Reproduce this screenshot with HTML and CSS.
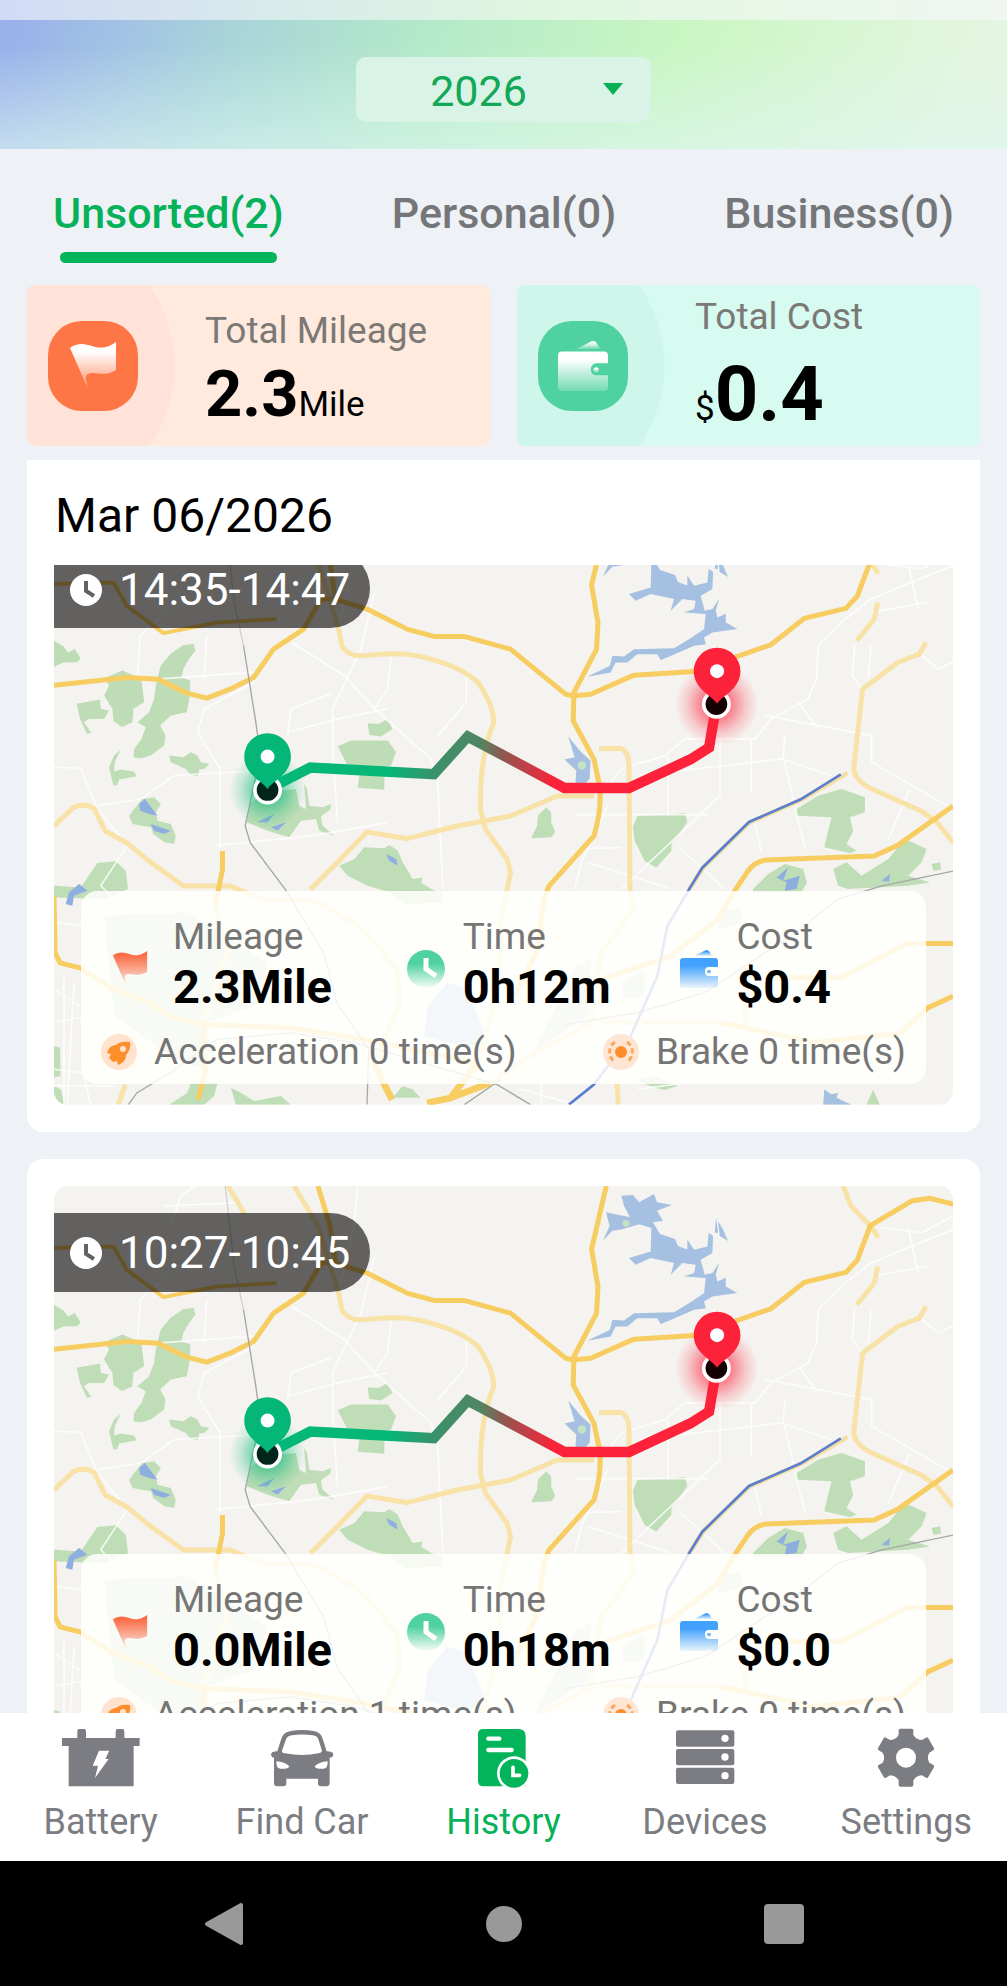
FILE: index.html
```html
<!DOCTYPE html>
<html lang="en">
<head>
    <meta charset="UTF-8">
    <meta name="viewport" content="width=device-width, initial-scale=1.0">
    <title>Trip History</title>
    <link rel="stylesheet" href="styles.css">
</head>
<body>
    <!-- Shared drawings -->
    <svg class="sprite" aria-hidden="true">
        <defs>
            <linearGradient id="fade-white" x1="0" y1="0" x2="0" y2="1">
                <stop offset="0.2" stop-color="#fff"/>
                <stop offset="1" stop-color="#fff" stop-opacity="0.2"/>
            </linearGradient>
            <linearGradient id="fade-orange" x1="0" y1="0" x2="0" y2="1">
                <stop offset="0.1" stop-color="#fb6a43"/>
                <stop offset="1" stop-color="#fb6a43" stop-opacity="0.1"/>
            </linearGradient>
            <linearGradient id="fade-green" x1="0" y1="0" x2="0" y2="1">
                <stop offset="0.35" stop-color="#4fd1a2"/>
                <stop offset="1" stop-color="#4fd1a2" stop-opacity="0.05"/>
            </linearGradient>
            <linearGradient id="fade-blue" x1="0" y1="0" x2="0" y2="1">
                <stop offset="0.25" stop-color="#42a1fc"/>
                <stop offset="1" stop-color="#42a1fc" stop-opacity="0.1"/>
            </linearGradient>
            <linearGradient id="route" gradientUnits="userSpaceOnUse" x1="1000" y1="0" x2="1500" y2="0">
                <stop offset="0" stop-color="#04b778"/>
                <stop offset="0.3" stop-color="#3c8f6a"/>
                <stop offset="0.55" stop-color="#508763"/>
                <stop offset="0.7" stop-color="#93554f"/>
                <stop offset="1" stop-color="#fc223a"/>
            </linearGradient>
            <radialGradient id="glow-green">
                <stop offset="0.3" stop-color="#04b778" stop-opacity="0.6"/>
                <stop offset="0.7" stop-color="#04b778" stop-opacity="0.2"/>
                <stop offset="1" stop-color="#04b778" stop-opacity="0"/>
            </radialGradient>
            <radialGradient id="glow-red">
                <stop offset="0.3" stop-color="#fc223a" stop-opacity="0.6"/>
                <stop offset="0.7" stop-color="#fc223a" stop-opacity="0.2"/>
                <stop offset="1" stop-color="#fc223a" stop-opacity="0"/>
            </radialGradient>

            <symbol id="flag" viewBox="0 0 46 47">
                <path d="M0 6C8 0 15 2 22 4C31 7 38 6 46 0V28C39 33 31 32 23 31C17 31 15 33 16 38L18 47Z"/>
            </symbol>
            <symbol id="wallet" viewBox="0 0 38 38">
                <path d="M3 8H35Q38 8 38 11V17H29A4 4 0 0 0 25 21V22A4 4 0 0 0 29 26H38V35Q38 38 35 38H3Q0 38 0 35V11Q0 8 3 8Z"/>
                <path d="M14 6L24 1Q27 -1 29 1L32 6Z"/>
                <circle cx="29" cy="22" r="2"/>
            </symbol>
            <symbol id="rocket" viewBox="0 0 36 36">
                <circle cx="18" cy="18" r="18" fill="#ffe3cf"/>
                <path d="M29 8C23 7 18 8 15 11C10 11 7 15 6 19L10 20L8 24L12 28L16 27L17 31C22 29 25 26 25 21C28 18 30 13 29 8Z" fill="#fd8f2a"/>
                <circle cx="22" cy="15" r="3" fill="#ffe3cf"/>
            </symbol>
            <symbol id="brake" viewBox="0 0 36 36">
                <circle cx="18" cy="18" r="18" fill="#ffe6d4"/>
                <circle cx="18" cy="18" r="6" fill="#fd8f2a"/>
                <g fill="none" stroke="#fda75a" stroke-width="3" stroke-dasharray="5 3">
                    <path d="M12 8A12 12 0 0 0 12 28"/>
                    <path d="M24 8A12 12 0 0 1 24 28"/>
                </g>
            </symbol>

            <symbol id="map" viewBox="0 0 2694 1746" preserveAspectRatio="xMidYMid slice">
                <rect width="2694" height="1746" fill="#f4f3ef"/>

                <!-- parks -->
                <g fill="#bfddb6">
                    <path d="M0 356L28 372L42 391L62 380L80 408L70 420L28 421L0 434Z"/>
                    <path d="M418 365L424 385L405 410L388 440L382 466L408 474V515L398 570L350 580L318 610L334 640L330 670L290 700L262 708L238 706L240 680L262 650L275 615L250 600L285 570L300 530L305 490L320 430L350 395L385 370Z"/>
                    <path d="M150 468L205 445L262 470L270 540L238 560L235 600L204 614L178 596L175 560L150 520L165 490Z"/>
                    <path d="M68 545L138 532L140 560L165 565L150 590L105 590L90 600L112 632L98 634L78 590Z"/>
                    <path d="M200 683L180 700L165 735L178 790L190 788L195 772L248 762L240 748L200 742L180 748L182 720Z"/>
                    <path d="M345 700L388 705L410 690L430 700L440 720L465 725L450 740L435 742L432 762L410 758L395 740L350 720Z"/>
                    <path d="M265 830L300 825L320 845L305 870L310 895L350 905L365 940L360 965L330 960L298 935L290 915L235 905L225 880L240 860Z"/>
                    <path d="M940 603L972 605L1000 590L1014 620L980 643L945 638Z"/>
                    <path d="M850 672L890 655L1000 655L1025 690L1010 730L990 735V802L910 796L915 760L880 730Z"/>
                    <path d="M590 840L640 810L725 800L735 850L755 860L750 785L758 800L765 850L805 855L830 845L828 862L800 882L805 910L840 940L795 925L785 890L740 895L705 945L640 925L578 900Z"/>
                    <path d="M930 975L990 978L1005 968L1030 985L1045 1020L1075 1070L1105 1065L1100 1080L1130 1100L1165 1115L1160 1140L1050 1145L1010 1110L940 1090L880 1060L855 1030L900 1010Z"/>
                    <path d="M0 1090L80 1095L130 1022L185 1017L215 1045L222 1100L150 1130L0 1125Z"/>
                    <path d="M150 1180L400 1170L640 1320L600 1450L460 1500L450 1640L350 1600L180 1480Z" opacity="0.7"/>
                    <path d="M0 1570L18 1575L20 1660L0 1665ZM0 1690L20 1700L32 1746L0 1740Z"/>
                    <path d="M345 1746L400 1710L410 1680H490L480 1720L450 1746ZM530 1695L560 1710L600 1735L680 1720L710 1746H545Z"/>
                    <path d="M1015 1725L1045 1690L1075 1700L1098 1725Z"/>
                    <path d="M1475 855L1490 870V900L1502 930L1490 945L1430 948L1448 910L1450 880Z"/>
                    <path d="M1748 880L1830 878L1890 872L1898 900L1850 965V985L1805 1035L1770 1015L1740 955L1735 915Z"/>
                    <path d="M2225 860L2290 820L2360 800L2430 825V870L2385 885L2395 925L2375 965L2405 985L2385 992L2308 975L2330 885L2225 880Z"/>
                    <path d="M2335 1040L2375 1020L2420 1060L2500 1010L2550 950L2615 980L2600 1020L2560 1060L2625 1080L2560 1090L2380 1100L2350 1090ZM2630 1025L2655 1020L2658 1042L2635 1045Z"/>
                    <path d="M2095 1100L2140 1055L2190 1025L2245 1040L2256 1080L2240 1110H2095Z"/>
                    <path d="M1740 1671L1800 1660L1870 1690L1830 1702L1800 1695ZM2434 1746L2455 1702L2475 1746Z"/>
                    <path d="M1560 1330L1610 1310L1600 1480L1480 1560L1430 1600L1490 1480ZM2000 1160L2060 1160V1200L1990 1220ZM1700 1380L1770 1340V1420L1710 1430Z" opacity="0.7"/>
                </g>

                <!-- water -->
                <g fill="#a6c0e2">
                    <path d="M1700 29L1735 27L1753 49L1798 24L1807 49L1852 57L1807 74L1825 104L1795 109L1816 144L1861 159L1870 180L1898 190V160L1918 191L1958 181L1962 141L1975 150L1973 201L1938 221L1950 266L1973 261L1993 231L1983 266L1988 286L2013 275V301L2048 321L1973 331L1948 346L1953 366L1918 371L1818 414L1808 396H1748L1718 421H1683L1668 451L1598 464L1666 431L1673 401L1708 403L1738 381L1858 378L1903 351L1948 321L1953 276L1888 271L1918 261L1923 236L1883 231L1848 266L1858 231L1788 216L1743 236L1723 216L1788 196L1790 126L1753 115L1700 130L1673 134L1645 164L1665 120L1654 79L1726 94L1708 59Z"/>
                    <path d="M1541 643L1580 690L1608 715L1605 770L1585 790L1563 780L1565 745L1530 712L1560 705Z"/>
                    <path d="M1120 1450L1180 1380L1240 1400L1300 1560L1220 1570L1110 1540Z" opacity="0.9"/>
                    <path d="M2308 1700L2330 1715L2350 1710L2345 1725L2390 1746H2305Z"/>
                    <path d="M1990 105L2005 130L2020 165L1995 150ZM1980 140L1984 95L1990 140Z"/>
                </g>
                <g fill="#8faee0">
                    <path d="M255 845L272 830L295 860L310 880L285 875L258 865ZM290 905L350 925L330 935L300 925Z"/>
                    <path d="M608 900L660 875L640 900ZM650 915L695 900L670 925Z"/>
                    <path d="M45 1110L75 1085L100 1105L60 1120L55 1150L35 1145Z"/>
                    <path d="M2165 1065L2200 1035L2185 1075L2235 1060L2225 1100L2190 1105L2195 1080Z"/>
                    <path d="M995 995L1025 1010L1030 1030L1005 1015ZM2480 1075L2505 1055L2502 1078Z"/>
                </g>
                <circle cx="1714" cy="112" r="10" fill="#c5e3c0"/>
                <circle cx="1582" cy="730" r="12" fill="#c5e3c0"/>

                <!-- minor streets -->
                <g fill="none" stroke="#fff" stroke-width="5" stroke-linejoin="round" opacity="0.8">
                    <path d="M0 735L80 738L130 860L220 970L140 1090L230 1180M130 850L260 830L360 760L700 740"/>
                    <path d="M498 980V740L430 630L450 560L600 480M250 470L258 340L350 260M450 470L458 340M320 470L600 450"/>
                    <path d="M713 361L870 460L960 560L1130 710L1150 780L1165 1100M700 630L850 590L1000 560M835 690V560L920 380L960 210M700 640L710 560L830 515"/>
                    <path d="M1236 460V540L1150 640M1010 400L1000 500L960 560M835 690L850 900M480 970L780 940L1000 900"/>
                    <path d="M1560 877H1960M1660 790L1700 740L1830 700L1890 650H2100L2150 590L2260 530L2285 470L2290 370L2360 300L2450 230L2694 130"/>
                    <path d="M1840 700V880M1996 650V820L1700 1100M2090 650V810M2190 640L2185 700L2250 980M2130 580L2450 640V720L2694 860"/>
                    <path d="M1660 850L1580 1020L1560 1100M1570 980L1700 975M1600 1020L1850 1100M2230 540L2290 620M2565 800L2500 950M1750 760L2180 710L2330 760"/>
                    <path d="M2400 370L2392 460L2430 510M2448 370L2440 470M2480 126L2600 140L2694 90M2560 126L2590 260M2450 270L2620 240M2600 400L2650 440L2694 420"/>
                    <path d="M350 120L380 30L420 0M330 60L560 50M900 120L910 0M850 320L900 120"/>
                    <path d="M0 1200L80 1210M0 1400L78 1450M30 1360V1746M60 1380L40 1746M0 1500L100 1480M0 1640L160 1660M0 1690H180M90 1660L110 1746"/>
                    <path d="M1400 1700L1560 1746M1750 1700L1900 1680L2100 1600M1460 1660V1746M2100 900L2120 990M1880 980L2010 1100"/>
                </g>

                <!-- secondary roads -->
                <g fill="none" stroke="#f8e2a8" stroke-width="15" stroke-linejoin="round">
                    <path d="M719 0L791 119L853 321L863 371Q880 403 930 401Q1050 385 1128 411Q1220 435 1270 480Q1318 550 1318 601Q1275 700 1278 861L1293 921L1358 1011L1368 1051L1338 1200V1380L1268 1621"/>
                    <path d="M0 911L58 856Q90 840 120 858L153 926L218 961L278 1011L388 1091H528L628 1131L788 1136L928 1221L1028 1341L1038 1441L958 1621"/>
                    <path d="M768 1101L848 1021L938 929L1058 949L1208 911L1368 881L1508 821H1618"/>
                    <path d="M1633 679H1700Q1723 690 1723 730L1726 1101L1738 1161L1638 1291L1608 1501L1408 1611L1308 1681"/>
                    <path d="M2613 361L2593 396L2528 421L2423 501L2396 741Q2400 770 2440 795L2598 866L2648 901L2694 961"/>
                    <path d="M2468 241L2458 291L2406 356M2365 0L2388 59L2446 119L2470 155M521 0L572 84"/>
                    <path d="M2000 1500H1640M2070 1530V1360M1687 1681L1691 1746M213 1686L193 1746M483 1151L518 1291L448 1506"/>
                </g>

                <!-- main roads -->
                <g fill="none" stroke="#f7cd62" stroke-width="15" stroke-linejoin="round">
                    <path d="M0 489L218 466L313 471L398 513L458 528L528 501L598 466L658 381L748 321L800 231L843 231L938 261L1058 321L1138 343H1228L1368 381L1533 516L1558 521L1608 516L1738 459L1908 449L2048 403L2148 368L2248 289L2373 259L2408 221L2446 119L2572 44L2626 37L2694 54"/>
                    <path d="M791 0L827 119L843 231"/>
                    <path d="M0 186L178 181L218 251L328 333L488 301L668 291" stroke-width="12"/>
                    <path d="M1655 0L1611 189L1630 301L1626 381L1558 511L1556 596L1618 711L1633 781Q1645 850 1618 941L1483 1091L1468 1131L1450 1280L1368 1441"/>
                    <path d="M2694 851L2528 969L2458 1001L2133 1013Q2100 1018 2080 1045L2043 1101L1988 1191L1848 1301L1640 1370"/>
                    <path d="M505 986V1041L483 1151"/>
                    <path d="M0 1121L3 1290L18 1321L78 1336L178 1401L278 1436L358 1486L448 1506L708 1516L928 1551L1268 1621M448 1506L453 1641L433 1731"/>
                    <path d="M2694 1263H2558L2358 1366H2158M2694 1421L2618 1456L2538 1531L2280 1560L2000 1500"/>
                    <path d="M958 1621L1013 1731M1118 1741L1188 1726L1308 1681M1188 1726L1268 1621" stroke-width="20"/>
                </g>

                <!-- railways -->
                <g fill="none" stroke="#a6a6a6" stroke-width="4">
                    <path d="M513 0L540 240L568 371" stroke="#d2d1ce"/>
                    <path d="M568 371L605 601L618 700L573 911L588 961L648 1041L693 1101L808 1291L848 1441L943 1581L938 1746"/>
                    <path d="M223 1746L248 1711L348 1651L488 1551L708 1531L900 1560L1328 1686L1428 1746M1230 1746L1340 1670"/>
                    <path d="M2694 1046L2478 1091L2348 1131L2208 1241L1948 1411L1748 1471L1528 1506"/>
                </g>
                <path d="M2378 752L2238 833L2083 901L1943 1038L1903 1101" fill="none" stroke="#f4dfa6" stroke-width="14"/>
                <path d="M2358 756L2238 831L2083 899L1943 1036L1903 1101L1838 1211L1808 1361L1728 1541L1618 1686L1543 1746" fill="none" stroke="#5b7fd0" stroke-width="8"/>

                <!-- route -->
                <circle cx="640" cy="803" r="115" fill="url(#glow-green)"/>
                <circle cx="1986" cy="546" r="125" fill="url(#glow-red)"/>
                <path d="M640 801L768 736L1138 756L1240 643L1530 797H1723L1908 711L1963 676L1985 546" fill="none" stroke="url(#route)" stroke-width="31"/>
                <circle cx="640" cy="803" r="38" fill="#04251b" stroke="#fff" stroke-width="11"/>
                <circle cx="1985" cy="546" r="38" fill="#160205" stroke="#fff" stroke-width="11"/>
                <g transform="translate(640 703)">
                    <path d="M0 98C-10 76 -70 55 -70 0A70 70 0 1 1 70 0C70 55 10 76 0 98Z" fill="#04b778"/>
                    <circle r="21" fill="#fff"/>
                </g>
                <g transform="translate(1987 447)">
                    <path d="M0 98C-10 76 -70 55 -70 0A70 70 0 1 1 70 0C70 55 10 76 0 98Z" fill="#fc223a"/>
                    <circle r="21" fill="#fff"/>
                </g>
            </symbol>
        </defs>
    </svg>

    <div class="status-strip"></div>

    <header class="header">
        <div class="year">
            <select class="year-select" aria-label="Year">
                <option>2026</option>
                <option>2025</option>
            </select>
            <svg class="year-arrow" viewBox="0 0 20 12" aria-hidden="true"><path d="M0 0H20L10 12Z" fill="#07b052"/></svg>
        </div>
    </header>

    <nav class="tabs">
        <button class="tab active">Unsorted(2)</button>
        <button class="tab">Personal(0)</button>
        <button class="tab">Business(0)</button>
    </nav>

    <section class="stats">
        <div class="stat mileage">
            <div class="stat-icon">
                <svg width="46" height="47" fill="url(#fade-white)"><use href="#flag"/></svg>
            </div>
            <div class="stat-text">
                <p class="stat-label">Total Mileage</p>
                <p class="stat-value">2.3<span class="unit">Mile</span></p>
            </div>
        </div>
        <div class="stat cost">
            <div class="stat-icon">
                <svg width="50" height="50" fill="url(#fade-white)"><use href="#wallet"/></svg>
            </div>
            <div class="stat-text">
                <p class="stat-label">Total Cost</p>
                <p class="stat-value"><span class="unit">$</span>0.4</p>
            </div>
        </div>
    </section>

    <main class="history">
        <h1 class="date">Mar 06/2026</h1>

        <article class="trip">
            <div class="trip-map">
                <svg class="map" aria-hidden="true"><use href="#map"/></svg>
                <div class="trip-time">
                    <svg width="34" height="34" viewBox="0 0 34 34" aria-hidden="true"><circle cx="17" cy="17" r="16" fill="#fff"/><path d="M17 8V18L25 23" fill="none" stroke="#636261" stroke-width="4"/></svg>
                    14:35-14:47
                </div>
                <div class="trip-info">
                    <div class="metrics">
                        <div class="metric distance">
                            <svg width="38" height="35" fill="url(#fade-orange)"><use href="#flag"/></svg>
                            <div>
                                <p class="metric-label">Mileage</p>
                                <p class="metric-value">2.3Mile</p>
                            </div>
                        </div>
                        <div class="metric">
                            <svg width="38" height="38" viewBox="0 0 38 38"><circle cx="19" cy="19" r="19" fill="url(#fade-green)"/><path d="M19 8V19L29 26" fill="none" stroke="#fff" stroke-width="5"/></svg>
                            <div>
                                <p class="metric-label">Time</p>
                                <p class="metric-value">0h12m</p>
                            </div>
                        </div>
                        <div class="metric">
                            <svg width="38" height="38" fill="url(#fade-blue)"><use href="#wallet"/></svg>
                            <div>
                                <p class="metric-label">Cost</p>
                                <p class="metric-value">$0.4</p>
                            </div>
                        </div>
                    </div>
                    <div class="events">
                        <p class="event"><svg width="36" height="36"><use href="#rocket"/></svg>Acceleration 0 time(s)</p>
                        <p class="event"><svg width="36" height="36"><use href="#brake"/></svg>Brake 0 time(s)</p>
                    </div>
                </div>
            </div>
        </article>

        <article class="trip">
            <div class="trip-map">
                <svg class="map" aria-hidden="true"><use href="#map"/></svg>
                <div class="trip-time">
                    <svg width="34" height="34" viewBox="0 0 34 34" aria-hidden="true"><circle cx="17" cy="17" r="16" fill="#fff"/><path d="M17 8V18L25 23" fill="none" stroke="#636261" stroke-width="4"/></svg>
                    10:27-10:45
                </div>
                <div class="trip-info">
                    <div class="metrics">
                        <div class="metric distance">
                            <svg width="38" height="35" fill="url(#fade-orange)"><use href="#flag"/></svg>
                            <div>
                                <p class="metric-label">Mileage</p>
                                <p class="metric-value">0.0Mile</p>
                            </div>
                        </div>
                        <div class="metric">
                            <svg width="38" height="38" viewBox="0 0 38 38"><circle cx="19" cy="19" r="19" fill="url(#fade-green)"/><path d="M19 8V19L29 26" fill="none" stroke="#fff" stroke-width="5"/></svg>
                            <div>
                                <p class="metric-label">Time</p>
                                <p class="metric-value">0h18m</p>
                            </div>
                        </div>
                        <div class="metric">
                            <svg width="38" height="38" fill="url(#fade-blue)"><use href="#wallet"/></svg>
                            <div>
                                <p class="metric-label">Cost</p>
                                <p class="metric-value">$0.0</p>
                            </div>
                        </div>
                    </div>
                    <div class="events">
                        <p class="event"><svg width="36" height="36"><use href="#rocket"/></svg>Acceleration 1 time(s)</p>
                        <p class="event"><svg width="36" height="36"><use href="#brake"/></svg>Brake 0 time(s)</p>
                    </div>
                </div>
            </div>
        </article>
    </main>

    <nav class="tabbar">
        <a class="tabbar-item" href="#battery">
            <svg viewBox="0 0 240 180">
                <path d="M49 30V9Q49 3 55 3H69Q75 3 75 9V30H164V9Q164 3 170 3H184Q190 3 190 9V30H236V54H218V175H23V54H3V30Z"/>
                <path d="M114 68H145L133 93H143L102 150L111 113H95Z" fill="#fff"/>
            </svg>
            Battery
        </a>
        <a class="tabbar-item" href="#find-car">
            <svg viewBox="0 0 240 180">
                <path d="M57 35Q62 14 84 10Q120 2 158 10Q178 14 183 35L194 70Q213 70 214 80Q213 88 203 89V165Q203 175 193 175H176Q168 175 168 165V152H73V165Q73 175 63 175H46Q36 175 36 165V89Q28 88 27 80Q28 70 46 70Z"/>
                <path d="M72 34Q76 24 90 22Q120 17 152 22Q166 24 169 34L180 68Q179 75 170 76Q120 86 70 76Q59 75 60 68ZM43 100Q68 102 82 115Q80 122 68 122H55Q42 122 43 100ZM197 100Q172 102 158 115Q160 122 172 122H185Q198 122 197 100Z" fill="#fff"/>
            </svg>
            Find Car
        </a>
        <a class="tabbar-item active" href="#history">
            <svg viewBox="0 0 240 180">
                <path d="M61 3H166Q188 3 188 25V175H61Q45 175 45 159V19Q45 3 61 3Z"/>
                <path d="M76 32H109M76 66H146" fill="none" stroke="#fff" stroke-width="13" stroke-linecap="round"/>
                <circle cx="153" cy="136" r="51" fill="#fff"/>
                <circle cx="153" cy="136" r="43"/>
                <path d="M150 118V142H170" fill="none" stroke="#fff" stroke-width="11" stroke-linecap="round"/>
            </svg>
            History
        </a>
        <a class="tabbar-item" href="#devices">
            <svg viewBox="0 0 240 180">
                <rect x="33" y="7" width="175" height="49" rx="6"/>
                <rect x="33" y="63" width="175" height="49" rx="6"/>
                <rect x="33" y="119" width="175" height="49" rx="6"/>
                <g fill="#fff"><circle cx="180" cy="31" r="11"/><circle cx="180" cy="87" r="11"/><circle cx="180" cy="143" r="11"/></g>
            </svg>
            Devices
        </a>
        <a class="tabbar-item" href="#settings">
            <svg viewBox="-120 -89 240 180">
                <defs><path id="tooth" d="M-22 -82Q-22 -87 -17 -87H17Q22 -87 22 -82V-68L36 -50H-36L-22 -68Z"/></defs>
                <circle r="66"/>
                <use href="#tooth"/>
                <use href="#tooth" transform="rotate(60)"/>
                <use href="#tooth" transform="rotate(120)"/>
                <use href="#tooth" transform="rotate(180)"/>
                <use href="#tooth" transform="rotate(240)"/>
                <use href="#tooth" transform="rotate(300)"/>
                <circle r="30" fill="#fff"/>
            </svg>
            Settings
        </a>
    </nav>

    <div class="system-nav">
        <button aria-label="Back"><svg viewBox="0 0 40 44"><path d="M3 22L37 3V41Z" stroke="#999" stroke-width="4" stroke-linejoin="round"/></svg></button>
        <button aria-label="Home"><svg viewBox="0 0 40 44"><circle cx="20" cy="22" r="18"/></svg></button>
        <button aria-label="Recent apps"><svg viewBox="0 0 40 44"><rect y="2" width="40" height="40" rx="4"/></svg></button>
    </div>
</body>
</html>
```

FILE: styles.css
```css
* {
    margin: 0;
    padding: 0;
    box-sizing: border-box;
}

body {
    font-family: Roboto, sans-serif;
    background: #eef1f6;
    color: #000;
    height: 100vh;
    display: flex;
    flex-direction: column;
    overflow: hidden;
}

button {
    font: inherit;
    border: none;
    background: none;
    cursor: pointer;
}

svg {
    display: block;
    flex-shrink: 0;
}

.sprite {
    position: absolute;
    width: 0;
    height: 0;
}

.status-strip {
    height: 20px;
    background: linear-gradient(90deg, #d2dbf6, #d9ecea 30%, #dff7e0 55%, #e8f7e8 75%, #f0f6f1);
}

.header {
    display: flex;
    justify-content: center;
    padding: 37px 20px 27px;
    background:
        linear-gradient(180deg, rgba(222, 246, 242, 0) 20%, rgba(222, 246, 242, 0.6)),
        linear-gradient(105deg, #9ab2ea 2%, #a4c6e2 14%, #a9d6d8 24%, #b4eac8 42%, #caf6c3 66%, #e3f6df 94%);
}

.year {
    position: relative;
}

.year-select {
    appearance: none;
    width: 295px;
    height: 65px;
    padding: 2px 50px 0 0;
    border: none;
    border-radius: 10px;
    background: #daf3e7;
    color: #12a857;
    font-family: inherit;
    font-size: 43px;
    text-align: center;
    text-align-last: center;
}

.year-arrow {
    position: absolute;
    top: 26px;
    right: 28px;
    width: 20px;
    height: 12px;
    pointer-events: none;
}

.tabs {
    display: flex;
    justify-content: space-between;
    padding: 39px 53px 22px;
}

.tab {
    color: #757679;
    font-size: 43px;
    font-weight: 500;
    line-height: 50px;
}

.tab::after {
    content: '';
    display: block;
    height: 11px;
    margin: 14px 7px 0;
    border-radius: 6px;
}

.tab.active {
    color: #06b259;
}

.tab.active::after {
    background: #04b45a;
}

.stats {
    display: grid;
    grid-template-columns: 1fr 1fr;
    gap: 27px;
    padding: 0 27px;
}

.stat {
    display: flex;
    align-items: center;
    gap: 67px;
    height: 161px;
    padding-left: 21px;
    border-radius: 8px;
}

.stat.mileage {
    background: radial-gradient(circle at 8px 50%, #ffe3d8 139px, #ffeadd 140px);
}

.stat.cost {
    background: radial-gradient(circle at 8px 50%, #cff6eb 139px, #d7fbf0 140px);
}

.stat-icon {
    display: flex;
    align-items: center;
    justify-content: center;
    width: 90px;
    height: 90px;
    border-radius: 34px;
    background: #ff7646;
}

.stat.cost .stat-icon {
    background: #4fd1a2;
}

.stat-label {
    margin-bottom: 14px;
    color: #7b7875;
    font-size: 37px;
    line-height: 42px;
}

.stat-value {
    font-size: 65px;
    font-weight: 700;
    line-height: 56px;
}

.stat.cost .stat-value {
    font-size: 76px;
    line-height: 84px;
}

.stat-value .unit {
    font-size: 35px;
    font-weight: 400;
    line-height: 1;
}

.history {
    flex: 1;
    min-height: 0;
    margin-top: 14px;
    padding: 0 27px;
    overflow: hidden;
}

.date {
    position: relative;
    z-index: 1;
    margin-bottom: -70px;
    padding: 28px 28px 21px;
    background: #fff;
    font-size: 48px;
    font-weight: 400;
    line-height: 56px;
}

.trip {
    margin-bottom: 27px;
    padding: 27px;
    border-radius: 16px;
    background: #fff;
}

.trip-map {
    position: relative;
    aspect-ratio: 898 / 582;
    border-radius: 14px;
    overflow: hidden;
}

.map {
    width: 100%;
    height: 100%;
}

.trip-time {
    position: absolute;
    top: 27px;
    left: 0;
    display: flex;
    align-items: center;
    gap: 16px;
    height: 79px;
    padding: 2px 20px 0 15px;
    border-radius: 0 40px 40px 0;
    background: rgba(0, 0, 0, 0.6);
    color: #fff;
    font-size: 44px;
}

.trip-info {
    position: absolute;
    right: 27px;
    bottom: 21px;
    left: 27px;
    padding: 25px 0 11px;
    border-radius: 16px;
    background: rgba(255, 255, 253, 0.85);
}

.metrics {
    display: grid;
    grid-template-columns: 295fr 273fr 245fr;
    padding-left: 30px;
}

.metric {
    display: flex;
    align-items: center;
    gap: 18px;
}

.metric svg {
    margin-top: 6px;
}

.metric.distance {
    gap: 24px;
}

.metric-label {
    color: #757575;
    font-size: 37px;
    line-height: 42px;
}

.metric-value {
    font-size: 47px;
    font-weight: 700;
    line-height: 58px;
}

.events {
    display: flex;
    justify-content: space-between;
    margin-top: 15px;
    padding: 0 20px;
}

.event {
    display: flex;
    align-items: center;
    gap: 17px;
    color: #757575;
    font-size: 37px;
    line-height: 42px;
}

.tabbar {
    display: grid;
    grid-template-columns: repeat(5, 1fr);
    background: #fff;
}

.tabbar-item {
    display: flex;
    flex-direction: column;
    align-items: center;
    gap: 13px;
    padding: 15px 0 18px;
    color: #7b7d82;
    font-size: 36px;
    line-height: 42px;
    text-decoration: none;
}

.tabbar-item svg {
    width: 80px;
    height: 60px;
    fill: #7b7d82;
}

.tabbar-item.active {
    color: #06b259;
}

.tabbar-item.active svg {
    fill: #04b45a;
}

.system-nav {
    display: flex;
    align-items: center;
    justify-content: center;
    gap: 240px;
    height: 125px;
    background: #000;
}

.system-nav svg {
    width: 40px;
    height: 44px;
    fill: #999;
}
```
